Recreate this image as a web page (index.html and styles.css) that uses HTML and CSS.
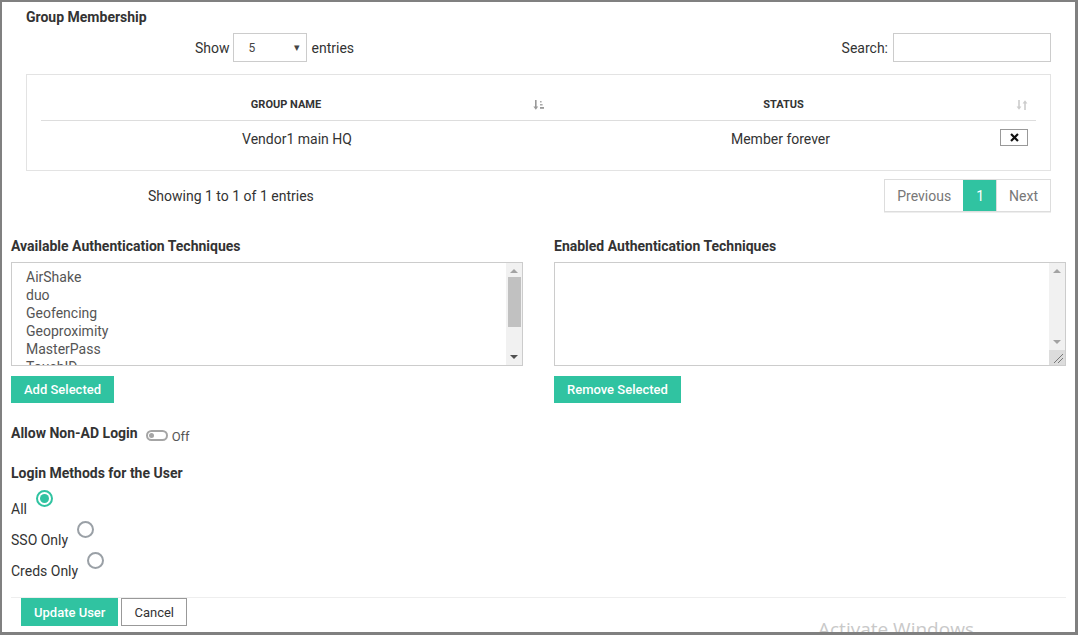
FILE: index.html
```html
<!DOCTYPE html>
<html>
<head>
<meta charset="utf-8">
<link rel="stylesheet" href="styles.css">
</head>
<body>
<div class="frame">
  <section class="group">
    <h3 class="title">Group Membership</h3>
    <div class="dt-top">
      <div class="length">
        <span>Show</span>
        <div class="select"><span>5</span><span class="caret">&#9662;</span></div>
        <span>entries</span>
      </div>
      <div class="search">
        <span>Search:</span>
        <div class="input"></div>
      </div>
    </div>
    <div class="table-box">
      <div class="grid">
        <div class="th">
          <span class="th-text">GROUP NAME</span>
          <svg class="sort" width="12" height="12" viewBox="0 0 12 12">
            <rect x="2" y="1" width="1.6" height="8" fill="#999"/>
            <path d="M0.4 7.5 L5.2 7.5 L2.8 10.8 Z" fill="#999"/>
            <rect x="7" y="2" width="1.6" height="1.5" fill="#aaa"/>
            <rect x="7" y="5" width="2.6" height="1.5" fill="#aaa"/>
            <rect x="7" y="8" width="4" height="1.8" fill="#999"/>
          </svg>
        </div>
        <div class="th">
          <span class="th-text">STATUS</span>
          <svg class="sort" width="12" height="12" viewBox="0 0 12 12">
            <rect x="2.2" y="1" width="1.6" height="8" fill="#ccc"/>
            <path d="M0.6 7.5 L5.4 7.5 L3 10.8 Z" fill="#ccc"/>
            <rect x="8.2" y="3" width="1.6" height="8" fill="#ccc"/>
            <path d="M6.6 4.5 L11.4 4.5 L9 1.2 Z" fill="#ccc"/>
          </svg>
        </div>
        <div class="td">Vendor1 main HQ</div>
        <div class="td td-status">
          <span class="td-text">Member forever</span>
          <button class="xbtn"><svg width="10" height="10" viewBox="0 0 10 10"><path d="M2 2 L8 8 M8 2 L2 8" stroke="#111" stroke-width="2.4" stroke-linecap="square"/></svg></button>
        </div>
      </div>
    </div>
    <div class="dt-bottom">
      <div class="info">Showing 1 to 1 of 1 entries</div>
      <div class="pager">
        <span class="pg">Previous</span>
        <span class="pg active">1</span>
        <span class="pg">Next</span>
      </div>
    </div>
  </section>

  <section class="techs">
    <div class="col">
      <h4 class="label">Available Authentication Techniques</h4>
      <div class="listbox">
        <div class="items">
          <div>AirShake</div>
          <div>duo</div>
          <div>Geofencing</div>
          <div>Geoproximity</div>
          <div>MasterPass</div>
          <div>TouchID</div>
        </div>
        <div class="sbar">
          <span class="arr up"></span>
          <span class="thumb"></span>
          <span class="fill"></span>
          <span class="arr down"></span>
        </div>
      </div>
      <button class="btn green">Add Selected</button>
    </div>
    <div class="col">
      <h4 class="label">Enabled Authentication Techniques</h4>
      <div class="listbox">
        <div class="items"></div>
        <div class="sbar light">
          <span class="arr up"></span>
          <span class="fill"></span>
          <span class="arr down"></span>
          <span class="grip"><svg width="16" height="14" viewBox="0 0 16 14"><path d="M14 4 L5 13 M14 8 L9 13" stroke="#777" stroke-width="1"/></svg></span>
        </div>
      </div>
      <button class="btn green">Remove Selected</button>
    </div>
  </section>

  <div class="nonad">
    <h4 class="label">Allow Non-AD Login</h4>
    <span class="toggle"><span class="knob"></span></span>
    <span class="off">Off</span>
  </div>

  <h4 class="label methods">Login Methods for the User</h4>
  <div class="radio-row"><span class="rtext">All</span><span class="radio checked"></span></div>
  <div class="radio-row"><span class="rtext">SSO Only</span><span class="radio"></span></div>
  <div class="radio-row"><span class="rtext">Creds Only</span><span class="radio"></span></div>

  <div class="footer">
    <button class="btn green big">Update User</button>
    <button class="btn cancel">Cancel</button>
  </div>

  <div class="watermark">Activate Windows</div>
</div>
</body>
</html>
```

FILE: styles.css
```css
* { box-sizing: border-box; }
html, body { margin: 0; padding: 0; background: #fff; }
body { font-family: Roboto, "Noto Sans", Arial, sans-serif; font-size: 14px; color: #333; }

.frame {
  position: relative;
  width: 1078px;
  height: 635px;
  overflow: hidden;
  border-style: solid;
  border-color: #808080;
  border-width: 2px 3px 3px 2px;
  padding: 5px 9px 0 9px;
}

.group { padding: 0 15px; }
.title { margin: 0; font-size: 14px; font-weight: 700; line-height: 20px; color: #333; }

.dt-top { display: flex; justify-content: space-between; align-items: center; margin-top: 6px; height: 29px; }
.length { display: flex; align-items: center; gap: 3px; margin-left: 169px; color: #333; }
.length > span:last-child { margin-left: 2px; }
.select {
  width: 74px; height: 29px; border: 1px solid #ccc;
  display: flex; align-items: center; justify-content: space-between;
  padding: 0 6px 0 15px; font-size: 12px; color: #444;
}
.caret { font-size: 11px; color: #444; }
.search { display: flex; align-items: center; gap: 5px; color: #333; }
.input { width: 158px; height: 29px; border: 1px solid #ccc; }

.table-box { margin-top: 12px; border: 1px solid #e3e3e3; padding: 14px; }
.grid { display: grid; grid-template-columns: 512px 1fr; }
.th {
  display: flex; align-items: center; height: 32px;
  padding: 0 8px; border-bottom: 1px solid #ddd;
  font-size: 11px; font-weight: 700; color: #333;
}
.th-text { flex: 1; text-align: center; margin-right: 10px; }
.sort { flex: none; }
.td { height: 35px; display: flex; align-items: center; justify-content: center; color: #333; }
.td-status { justify-content: flex-start; padding: 0 8px; }
.td-text { flex: 1; text-align: center; }
.xbtn {
  width: 28px; height: 17px; border: 1px solid #999; background: #fff;
  padding: 0; display: flex; align-items: center; justify-content: center; margin-top: -2px;
}
.xbtn svg { width: 9px; height: 9px; }

.dt-bottom { display: flex; justify-content: space-between; align-items: center; margin-top: 8px; }
.info { margin-left: 122px; color: #333; }
.pager { display: flex; height: 33px; border: 1px solid #ddd; box-shadow: 0 1px 0 #eee; }
.pg { display: flex; align-items: center; padding: 0 12px; color: #777; }
.pg + .pg { border-left: 1px solid #ddd; }
.pg.active { background: #30c3a1; color: #fff; border-color: #30c3a1; }

.techs { display: flex; gap: 31px; margin-top: 24px; }
.col { flex: 1; }
.label { margin: 0; font-size: 14px; font-weight: 700; line-height: 20px; color: #333; }
.listbox { display: flex; height: 104px; border: 1px solid #ccc; margin-top: 6px; margin-bottom: 10px; }
.items { flex: 1; overflow: hidden; padding: 5px 14px; line-height: 18px; color: #555; }
.sbar { width: 16px; background: #f1f1f1; display: flex; flex-direction: column; align-items: center; }
.arr { width: 0; height: 0; border-left: 4px solid transparent; border-right: 4px solid transparent; margin: 6px 0; }
.arr.up { border-bottom: 4px solid #a3a3a3; }
.arr.down { border-top: 4px solid #505050; }
.thumb { width: 13px; height: 50px; background: #c1c1c1; margin-top: -2px; }
.fill { flex: 1; }
.sbar.light .arr.down { border-top-color: #a3a3a3; }
.grip { width: 16px; height: 15px; background: #dcdcdc; display: flex; }
.btn { font-family: inherit; font-size: 13px; border: none; cursor: pointer; }
.green { background: #30c3a1; color: #fff; height: 27px; padding: 0 13px; font-weight: 500; }

.nonad { display: flex; align-items: center; margin-top: 20px; height: 20px; }
.toggle {
  width: 22px; height: 11px; border: 2px solid #a5a5a5; border-radius: 6px;
  margin-left: 8px; margin-top: 5px; display: flex; align-items: center; padding-left: 1px;
}
.knob { width: 5px; height: 5px; border-radius: 50%; background: #a5a5a5; }
.off { margin-left: 4px; margin-top: 6px; font-size: 13px; color: #555; }

.methods { margin-top: 20px; margin-bottom: 6px; }
.radio-row { display: flex; align-items: flex-start; height: 31px; }
.rtext { padding-top: 10px; line-height: 20px; color: #333; }
.radio {
  width: 17px; height: 17px; border-radius: 50%; border: 2px solid #9aa0a6;
  margin-left: 9px; margin-top: 1px; display: flex; align-items: center; justify-content: center;
}
.radio.checked { border-color: #30c3a1; }
.radio.checked::after { content: ""; width: 9px; height: 9px; border-radius: 50%; background: #30c3a1; }

.footer { margin-top: 15px; border-top: 1px solid #eee; padding-left: 10px; display: flex; gap: 3px; align-items: flex-start; }
.big { height: 28px; padding: 0 13px; }
.cancel { background: #fff; color: #333; border: 1px solid #999; height: 28px; padding: 0 12px; }

.watermark {
  position: absolute; left: 816px; top: 614px;
  font-family: "Open Sans", "Noto Sans", sans-serif; font-size: 19px; color: #c9c9c9;
}
```
